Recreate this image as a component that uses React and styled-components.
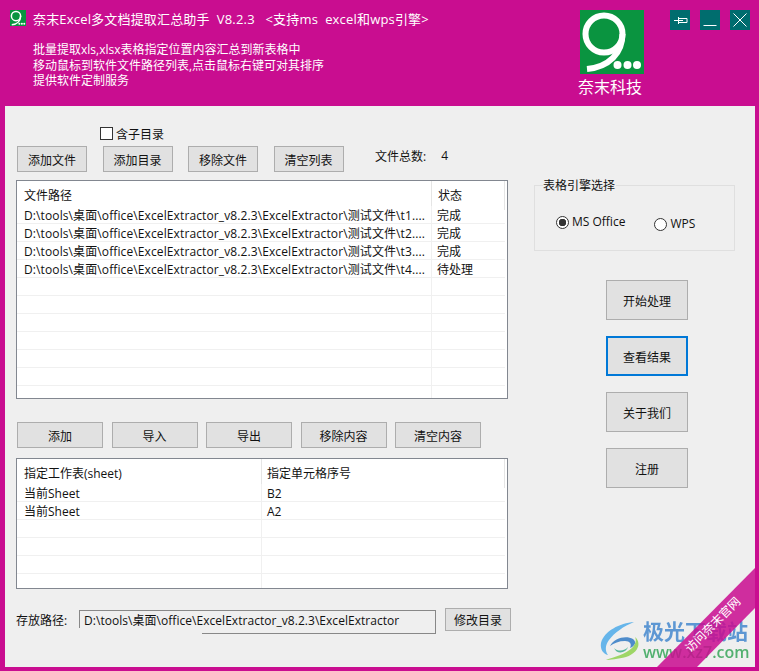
import React from "react";
import styled, { createGlobalStyle } from "styled-components";

const MAGENTA = "#c90d90";
const FONT = `"Open Sans", "Noto Sans CJK SC", sans-serif`;

const Global = createGlobalStyle`
  html, body { margin: 0; padding: 0; overflow: hidden; }
  body { font-family: ${FONT}; font-size: 12px; color: #111; }
`;

const Shell = styled.div`
  position: relative;
  width: 759px;
  height: 671px;
  box-sizing: border-box;
  padding: 0 4px 4px 5px;
  background: ${MAGENTA};
  display: flex;
  flex-direction: column;
  overflow: hidden;
`;

const Header = styled.header`
  height: 106px;
  flex: none;
  display: flex;
  align-items: flex-start;
  color: #fff;
  padding-left: 5px;
`;
const HeaderText = styled.div`
  flex: 1;
  padding-top: 10px;
`;
const TitleRow = styled.div`
  display: flex;
  align-items: center;
  gap: 7px;
  height: 16px;
  font-size: 13px;
  letter-spacing: 0.18px;
  white-space: pre;
`;
const Desc = styled.div`
  margin: 16px 0 0 23px;
  line-height: 15.5px;
`;
const Brand = styled.div`
  width: 66px;
  margin-right: 27px;
  padding-top: 10px;
  display: flex;
  flex-direction: column;
  align-items: center;
  font-size: 16px;
  line-height: 20px;
  gap: 3px;
`;
const BrandMark = styled.div`
  height: 64px;
  margin-left: 3px;
`;
const WinButtons = styled.div`
  display: flex;
  gap: 10px;
  padding-top: 10px;
  padding-right: 5px;
`;
const WinButton = styled.button`
  width: 20px;
  height: 20px;
  padding: 0;
  border: 0;
  background: #006d6e;
  display: flex;
`;

const Content = styled.main`
  flex: 1;
  background: #efefef;
  display: grid;
  grid-template-columns: 529px 1fr;
`;
const LeftCol = styled.section`
  padding: 21px 0 0 11px;
  display: flex;
  flex-direction: column;
`;
const RightCol = styled.section`
  padding-top: 71px;
  display: flex;
  flex-direction: column;
`;

const CheckRow = styled.label`
  margin-left: 84px;
  height: 19px;
  display: flex;
  align-items: flex-start;
  gap: 3px;
  font-size: 12px;
  line-height: 16px;
`;
const CheckBox = styled.input.attrs({ type: "checkbox" })`
  appearance: none;
  width: 13px;
  height: 13px;
  margin: 0;
  box-sizing: border-box;
  border: 1px solid #333;
  background: #fff;
`;

const Toolbar = styled.div`
  display: flex;
  gap: ${(p) => p.$gap}px;
  padding-left: 1px;
  margin-top: ${(p) => p.$top || 0}px;
`;
const Btn = styled.button`
  width: ${(p) => p.$w}px;
  height: ${(p) => p.$h}px;
  flex: none;
  padding: 1px 0 0;
  box-sizing: border-box;
  background: #e1e1e1;
  border: ${(p) => (p.$focus ? "2px solid #0078d7" : "1px solid #adadad")};
  font-family: ${FONT};
  font-size: 12px;
  color: #111;
`;
const Count = styled.div`
  margin-left: 16px;
  padding-top: 1px;
  display: flex;
  gap: 15px;
  white-space: pre;
`;

const ListView = styled.div`
  width: 492px;
  height: ${(p) => p.$h}px;
  margin-top: ${(p) => p.$top}px;
  box-sizing: border-box;
  border: 1px solid #828790;
  background: #fff;
  overflow: hidden;
`;
const HeadRow = styled.div`
  display: grid;
  grid-template-columns: ${(p) => p.$cols};
  width: 488px;
  height: 25px;
  line-height: 29px;
`;
const HeadCell = styled.div`
  padding-left: ${(p) => p.$pad}px;
  border-right: 1px solid #e5e5e5;
`;
const Row = styled.div`
  display: grid;
  grid-template-columns: ${(p) => p.$cols};
  width: 488px;
  height: 18px;
  box-sizing: border-box;
  border-bottom: 1px solid #f0f0f0;
  line-height: 19px;
`;
const Cell = styled.div`
  padding: 0 0 0 ${(p) => p.$pad}px;
  letter-spacing: ${(p) => p.$track || 0}px;
  white-space: nowrap;
  overflow: hidden;
  border-right: ${(p) => (p.$line ? "1px solid #f0f0f0" : "0")};
`;

const Footer = styled.div`
  margin-top: 19px;
  display: flex;
  align-items: flex-start;
`;
const PathLabel = styled.div`
  width: 63px;
  padding-top: 3px;
`;
const PathBox = styled.div`
  position: relative;
  width: 357px;
  height: 24px;
  margin: 2px 9px 0 0;
  box-sizing: border-box;
  padding-left: 5px;
  border-top: 1px solid #888;
  border-right: 1px solid #888;
  line-height: 19px;
  letter-spacing: 0.04px;
  white-space: nowrap;
  &::before {
    content: "";
    position: absolute;
    left: 0;
    top: 0;
    width: 1px;
    height: 17px;
    background: #888;
  }
  &::after {
    content: "";
    position: absolute;
    left: 123px;
    right: 0;
    bottom: 0;
    height: 1px;
    background: #888;
  }
`;

const EngineBox = styled.fieldset`
  width: 201px;
  height: 74px;
  margin: 0;
  padding: 0 0 0 21px;
  box-sizing: border-box;
  border: 1px solid #dfdfdf;
  display: flex;
  align-items: flex-start;
`;
const EngineTitle = styled.legend`
  margin-left: -13px;
  padding: 2px 1px 0 0;
  line-height: 14px;
  font-size: 12px;
`;
const RadioLabel = styled.label`
  display: flex;
  align-items: center;
  gap: 3px;
  line-height: 14px;
  margin-top: ${(p) => p.$top}px;
  margin-right: ${(p) => p.$right || 0}px;
`;
const Radio = styled.input.attrs({ type: "radio" })`
  appearance: none;
  width: 13px;
  height: 13px;
  margin: 0;
  box-sizing: border-box;
  border: 1px solid #333;
  border-radius: 50%;
  background: ${(p) => (p.checked ? "radial-gradient(circle, #333 0 3.5px, #fff 4px)" : "#fff")};
`;
const ActionCol = styled.div`
  margin: 29px 0 0 72px;
  display: flex;
  flex-direction: column;
  gap: 16px;
`;

/* stamped on the picture, the ribbon lets it show through faintly */
const Watermark = styled.div`
  position: absolute;
  left: 600px;
  top: 619px;
  display: flex;
  align-items: flex-end;
  gap: 3px;
  filter: blur(0.5px);
`;
const WatermarkText = styled.div`
  display: flex;
  flex-direction: column;
  white-space: nowrap;
`;
const WatermarkName = styled.div`
  font-size: 21px;
  line-height: 24px;
  font-weight: 700;
  color: #5d97d3;
`;
const WatermarkUrl = styled.div`
  font-size: 16px;
  line-height: 18px;
  font-weight: 600;
  color: #52b06f;
`;

const Ribbon = styled.a`
  position: absolute;
  right: 4px;
  bottom: 4px;
  width: 98px;
  height: 99px;
  background: rgba(201, 13, 144, 0.86);
  clip-path: polygon(98px 0, 98px 40px, 40px 99px, 0 99px);
  color: #fff;
  font-size: 12px;
`;
const RibbonText = styled.span`
  position: absolute;
  left: 20px;
  top: 50px;
  width: 72px;
  line-height: 14px;
  text-align: center;
  white-space: nowrap;
  transform: rotate(-45deg);
`;

function NineLogo({ size }) {
  return (
    <svg width={size} height={size} viewBox="0 0 64 64" style={{ display: "block" }}>
      <rect width="64" height="64" fill="#0a9440" />
      <circle cx="24" cy="24" r="18.5" fill="none" stroke="#fff" strokeWidth="6" />
      <path d="M42.5 24C42.5 43 29 57 7 59" fill="none" stroke="#fff" strokeWidth="6" />
      <circle cx="37.5" cy="55" r="4" fill="#fff" />
      <circle cx="47.5" cy="55" r="4" fill="#fff" />
      <circle cx="57" cy="55" r="4" fill="#fff" />
    </svg>
  );
}

function SwirlLogo() {
  return (
    <svg width="40" height="40" viewBox="0 0 40 40" style={{ flex: "none" }}>
      <path d="M34 1C20 2 4 10 1 22C0 28 3 33 8 34C5 30 5 24 9 19C14 12 24 5 34 1Z" fill="#66b5ea" />
      <path d="M10 25C14 17 26 14 33 18C37 21 35 25 30 27C32 23 30 20 25 20C19 20 14 22 10 25Z" fill="#4e8ccb" />
      <path d="M35 16C42 22 38 32 26 36C18 38 10 39 6 39C14 36 26 33 32 27C35 24 37 20 35 16Z" fill="#9ed667" />
      <path d="M14 27C18 31 25 30 28 26C26 32 17 34 14 27Z" fill="#58b89a" />
    </svg>
  );
}

const fileCols = "415px 73px";
const sheetCols = "245px 243px";
const base = "D:\\tools\\桌面\\office\\ExcelExtractor_v8.2.3\\ExcelExtractor";
const files = [
  [`${base}\\测试文件\\t1....`, "完成"],
  [`${base}\\测试文件\\t2....`, "完成"],
  [`${base}\\测试文件\\t3....`, "完成"],
  [`${base}\\测试文件\\t4....`, "待处理"],
  ...Array(7).fill(["", ""]),
];
const sheets = [
  ["当前Sheet", "B2"],
  ["当前Sheet", "A2"],
  ...Array(4).fill(["", ""]),
];

export default function App() {
  return (
    <Shell>
      <Global />
      <Header>
        <HeaderText>
          <TitleRow>
            <NineLogo size={16} />
            <span>奈末Excel多文档提取汇总助手  V8.2.3   &lt;支持ms  excel和wps引擎&gt;</span>
          </TitleRow>
          <Desc>
            批量提取xls,xlsx表格指定位置内容汇总到新表格中
            <br />
            移动鼠标到软件文件路径列表,点击鼠标右键可对其排序
            <br />
            提供软件定制服务
          </Desc>
        </HeaderText>
        <Brand>
          <BrandMark>
            <NineLogo size={64} />
          </BrandMark>
          <span>奈末科技</span>
        </Brand>
        <WinButtons>
          <WinButton aria-label="pin">
            <svg width="20" height="20" viewBox="0 0 20 20" fill="none" stroke="#fff">
              <path d="M4 10.5H13M8.5 7V14M8.5 8.5H17V12.5H8.5" />
            </svg>
          </WinButton>
          <WinButton aria-label="minimize">
            <svg width="20" height="20" viewBox="0 0 20 20" stroke="#fff">
              <path d="M3.5 15.5H16.5" />
            </svg>
          </WinButton>
          <WinButton aria-label="close">
            <svg width="20" height="20" viewBox="0 0 20 20" stroke="#fff">
              <path d="M3.5 3.5L16.5 16.5M16.5 3.5L3.5 16.5" />
            </svg>
          </WinButton>
        </WinButtons>
      </Header>
      <Content>
        <LeftCol>
          <CheckRow>
            <CheckBox />
            含子目录
          </CheckRow>
          <Toolbar $gap={15.5}>
            <Btn $w={70} $h={26}>添加文件</Btn>
            <Btn $w={70} $h={26}>添加目录</Btn>
            <Btn $w={70} $h={26}>移除文件</Btn>
            <Btn $w={70} $h={26}>清空列表</Btn>
            <Count>
              <span>文件总数:</span>
              <span>4</span>
            </Count>
          </Toolbar>
          <ListView $h={219} $top={8}>
            <HeadRow $cols={fileCols}>
              <HeadCell $pad={7}>文件路径</HeadCell>
              <HeadCell $pad={6}>状态</HeadCell>
            </HeadRow>
            {files.map(([path, state], i) => (
              <Row key={i} $cols={fileCols}>
                <Cell $pad={7} $line $track={0.11}>{path}</Cell>
                <Cell $pad={5}>{state}</Cell>
              </Row>
            ))}
          </ListView>
          <Toolbar $gap={8.5} $top={23}>
            <Btn $w={86} $h={26}>添加</Btn>
            <Btn $w={86} $h={26}>导入</Btn>
            <Btn $w={86} $h={26}>导出</Btn>
            <Btn $w={86} $h={26}>移除内容</Btn>
            <Btn $w={86} $h={26}>清空内容</Btn>
          </Toolbar>
          <ListView $h={131} $top={10}>
            <HeadRow $cols={sheetCols}>
              <HeadCell $pad={7}>指定工作表(sheet)</HeadCell>
              <HeadCell $pad={5}>指定单元格序号</HeadCell>
            </HeadRow>
            {sheets.map(([sheet, cell], i) => (
              <Row key={i} $cols={sheetCols}>
                <Cell $pad={7} $line>{sheet}</Cell>
                <Cell $pad={5}>{cell}</Cell>
              </Row>
            ))}
          </ListView>
          <Footer>
            <PathLabel>存放路径:</PathLabel>
            <PathBox>{base}</PathBox>
            <Btn $w={66} $h={23}>修改目录</Btn>
          </Footer>
        </LeftCol>
        <RightCol>
          <EngineBox>
            <EngineTitle>表格引擎选择</EngineTitle>
            <RadioLabel $top={22} $right={29}>
              <Radio name="engine" defaultChecked checked readOnly />
              MS Office
            </RadioLabel>
            <RadioLabel $top={24}>
              <Radio name="engine" />
              WPS
            </RadioLabel>
          </EngineBox>
          <ActionCol>
            <Btn $w={82} $h={40}>开始处理</Btn>
            <Btn $w={82} $h={40} $focus>查看结果</Btn>
            <Btn $w={82} $h={40}>关于我们</Btn>
            <Btn $w={82} $h={40}>注册</Btn>
          </ActionCol>
        </RightCol>
      </Content>
      <Watermark>
        <SwirlLogo />
        <WatermarkText>
          <WatermarkName>极光下载站</WatermarkName>
          <WatermarkUrl>www.xz7.com</WatermarkUrl>
        </WatermarkText>
      </Watermark>
      <Ribbon>
        <RibbonText>访问奈末官网</RibbonText>
      </Ribbon>
    </Shell>
  );
}
